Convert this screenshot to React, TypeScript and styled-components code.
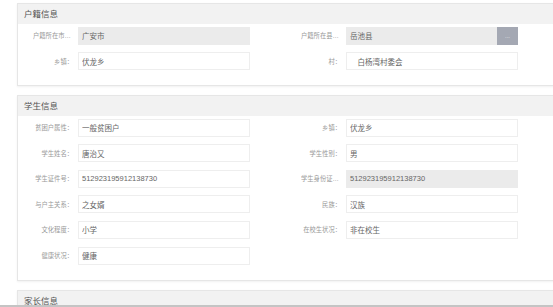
import React from "react";
import styled, { createGlobalStyle } from "styled-components";

const GlobalStyle = createGlobalStyle`
  html, body {
    margin: 0;
    padding: 0;
    background: #fff;
  }
  body {
    font-family: "Liberation Sans", "Noto Sans CJK SC", sans-serif;
  }
`;

type Field = {
  label: string;
  value: string;
  disabled?: boolean;
  picker?: boolean;
};

type Section = {
  title: string;
  fields: Field[];
};

const sections: Section[] = [
  {
    title: "户籍信息",
    fields: [
      { label: "户籍所在市州：", value: "广安市", disabled: true },
      { label: "户籍所在县区：", value: "岳池县", disabled: true, picker: true },
      { label: "乡镇：", value: "伏龙乡" },
      { label: "村：", value: "　白杨湾村委会" },
    ],
  },
  {
    title: "学生信息",
    fields: [
      { label: "贫困户属性：", value: "一般贫困户" },
      { label: "乡镇：", value: "伏龙乡" },
      { label: "学生姓名：", value: "唐治又" },
      { label: "学生性别：", value: "男" },
      { label: "学生证件号：", value: "512923195912138730" },
      { label: "学生身份证号：", value: "512923195912138730", disabled: true },
      { label: "与户主关系：", value: "之女婿" },
      { label: "民族：", value: "汉族" },
      { label: "文化程度：", value: "小学" },
      { label: "在校生状况：", value: "非在校生" },
      { label: "健康状况：", value: "健康" },
    ],
  },
];

export default function App() {
  return (
    <>
      <GlobalStyle />
      <Screen>
        <Content>
          {sections.map((section) => (
            <Panel key={section.title}>
              <PanelHeader>{section.title}</PanelHeader>
              <FormGrid>
                {section.fields.map((field, i) => (
                  <FieldRow key={i}>
                    <Label>{field.label}</Label>
                    <InputGroup>
                      <Input
                        readOnly
                        value={field.value}
                        $disabled={field.disabled}
                      />
                      {field.picker && <PickButton>...</PickButton>}
                    </InputGroup>
                  </FieldRow>
                ))}
              </FormGrid>
            </Panel>
          ))}
          <Panel>
            <PanelHeader>家长信息</PanelHeader>
          </Panel>
        </Content>
        <BottomBar />
      </Screen>
    </>
  );
}

const Screen = styled.div`
  width: 553px;
  height: 307px;
  display: flex;
  flex-direction: column;
  overflow: hidden;
`;

const Content = styled.div`
  flex: 1;
  min-height: 0;
  overflow: hidden;
  padding: 3px 0 0 17px;
  display: flex;
  flex-direction: column;
  gap: 9px;
`;

const Panel = styled.section`
  flex-shrink: 0;
  margin-right: -2px;
  border: 1px solid #e6e6e6;
  background: #fff;
  box-shadow: 0 1px 2px rgba(0, 0, 0, 0.06);
`;

const PanelHeader = styled.div`
  height: 20px;
  line-height: 20px;
  padding-left: 6px;
  background: #f2f2f2;
  color: #555;
  font-size: 8.5px;
`;

const FormGrid = styled.div`
  display: grid;
  grid-template-columns: 268px 265px;
  row-gap: 7.6px;
  padding: 2.5px 0 15px;
`;

const FieldRow = styled.div`
  display: flex;
  align-items: center;
  gap: 5px;
  padding-left: 15px;
`;

const Label = styled.div`
  width: 40px;
  flex-shrink: 0;
  text-align: right;
  font-size: 6.3px;
  color: #999;
  white-space: nowrap;
  overflow: hidden;
  text-overflow: ellipsis;
`;

const InputGroup = styled.div`
  display: flex;
  width: 172px;
  height: 18px;
`;

const Input = styled.input<{ $disabled?: boolean }>`
  flex: 1;
  min-width: 0;
  height: 18px;
  box-sizing: border-box;
  margin: 0;
  padding: 0 3px;
  border: 1px solid ${(p) => (p.$disabled ? "#ebebeb" : "#eeeeee")};
  background: ${(p) => (p.$disabled ? "#ebebeb" : "#fff")};
  color: #666;
  font-family: "Liberation Sans", "Noto Sans CJK SC", sans-serif;
  font-size: 7.5px;
  outline: 0;
`;

const PickButton = styled.div`
  width: 21px;
  flex-shrink: 0;
  background: #a4a8b3;
  color: #e8e9ec;
  font-size: 6px;
  display: flex;
  align-items: center;
  justify-content: center;
`;

const BottomBar = styled.div`
  height: 2px;
  flex-shrink: 0;
  background: #c4c4c4;
`;
